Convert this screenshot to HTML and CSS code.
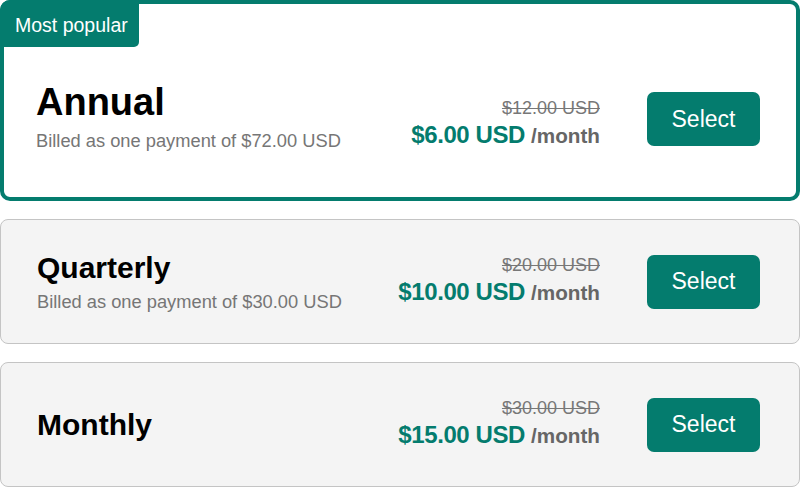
FILE: index.html
```html
<!DOCTYPE html>
<html lang="en">
<head>
<meta charset="utf-8">
<title>Plans</title>
<link rel="stylesheet" href="styles.css">
</head>
<body>
<main class="plans">
  <section class="plan plan--featured">
    <div class="badge">Most popular</div>
    <div class="plan-info">
      <h2 class="plan-name plan-name--lg">Annual</h2>
      <p class="plan-note">Billed as one payment of $72.00 USD</p>
    </div>
    <div class="plan-price plan-price--featured">
      <span class="price-old">$12.00 USD</span>
      <span class="price-now"><span class="price-amount">$6.00 USD</span><span class="price-per">/month</span></span>
    </div>
    <button class="select select--featured" type="button">Select</button>
  </section>

  <section class="plan">
    <div class="plan-info">
      <h2 class="plan-name">Quarterly</h2>
      <p class="plan-note">Billed as one payment of $30.00 USD</p>
    </div>
    <div class="plan-price">
      <span class="price-old">$20.00 USD</span>
      <span class="price-now"><span class="price-amount">$10.00 USD</span><span class="price-per">/month</span></span>
    </div>
    <button class="select" type="button">Select</button>
  </section>

  <section class="plan">
    <div class="plan-info">
      <h2 class="plan-name">Monthly</h2>
    </div>
    <div class="plan-price">
      <span class="price-old">$30.00 USD</span>
      <span class="price-now"><span class="price-amount">$15.00 USD</span><span class="price-per">/month</span></span>
    </div>
    <button class="select" type="button">Select</button>
  </section>
</main>
</body>
</html>
```

FILE: styles.css
```css
* {
  box-sizing: border-box;
}

html, body {
  margin: 0;
  padding: 0;
  background: #ffffff;
}

body {
  font-family: "Liberation Sans", Arial, sans-serif;
  color: #000;
}

.plans {
  width: 800px;
  display: flex;
  flex-direction: column;
  gap: 18px;
}

.plan {
  position: relative;
  display: flex;
  align-items: center;
  min-height: 125px;
  padding: 0 39px 0 36px;
  background: #f4f4f4;
  border: 1px solid #c4c4c4;
  border-radius: 8px;
}

.plan--featured {
  min-height: 201px;
  padding: 30px 36px 0 32px;
  background: #ffffff;
  border: 4px solid #047c6e;
  border-radius: 10px;
}

.badge {
  position: absolute;
  top: -4px;
  left: -4px;
  width: 139px;
  height: 47px;
  padding: 4px 0 0 15px;
  background: #047c6e;
  color: #ffffff;
  font-size: 19.5px;
  line-height: 43px;
  border-radius: 10px 0 5px 0;
}

.plan-info {
  flex: 1;
  min-width: 0;
}

.plan-name {
  margin: 0;
  font-size: 30px;
  line-height: 34px;
  font-weight: 700;
  color: #000;
}

.plan-name--lg {
  font-size: 38px;
  line-height: 44px;
}

.plan-note {
  margin: 6px 0 0;
  font-size: 18.3px;
  line-height: 21px;
  color: #767676;
}

.plan-price {
  display: flex;
  flex-direction: column;
  align-items: flex-end;
  margin-right: 47px;
}

.plan-price--featured {
  margin-top: 17px;
}

.price-old {
  font-size: 18px;
  line-height: 22px;
  color: #777777;
  text-decoration: line-through;
}

.price-now {
  margin-top: 2px;
  line-height: 28px;
  white-space: nowrap;
}

.price-amount {
  font-size: 24px;
  font-weight: 700;
  color: #047c6e;
  letter-spacing: -0.4px;
}

.price-per {
  margin-left: 6px;
  font-size: 20.7px;
  font-weight: 700;
  color: #666666;
}

.select {
  width: 113px;
  height: 54px;
  padding: 0;
  border: none;
  border-radius: 7px;
  background: #047c6e;
  color: #ffffff;
  font-family: "Liberation Sans", Arial, sans-serif;
  font-size: 23px;
  cursor: pointer;
}

.select--featured {
  margin-top: 7px;
}
```
